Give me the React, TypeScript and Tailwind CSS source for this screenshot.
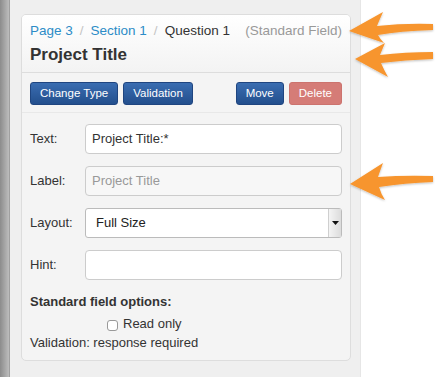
import { ReactNode } from 'react';

const font = { fontFamily: '"Liberation Sans", Arial, sans-serif' };

function Field({ label, children }: { label: string; children: ReactNode }) {
  return (
    <div className="flex items-center h-[30px]">
      <div className="w-[55px] text-[13px] text-[#333]">{label}</div>
      <div className="flex-1">{children}</div>
    </div>
  );
}

function Btn({ children, danger }: { children: ReactNode; danger?: boolean }) {
  return (
    <div
      className={
        danger
          ? 'h-[23px] px-[9px] flex items-center rounded-[3px] text-[11.5px] text-white bg-[#d57c77] border border-[#cc736e]'
          : 'h-[23px] px-[9px] flex items-center rounded-[3px] text-[11.5px] text-white bg-gradient-to-b from-[#3a6db1] to-[#234f8d] border border-[#1f4580]'
      }
    >
      {children}
    </div>
  );
}

function Arrows() {
  return (
    <svg className="absolute left-0 top-0 pointer-events-none" width="438" height="377">
      <defs>
        <filter id="sh" x="-10%" y="-20%" width="130%" height="150%">
          <feDropShadow dx="0" dy="1" stdDeviation="1" floodColor="#000" floodOpacity="0.25" />
        </filter>
      </defs>
      <g fill="#f7952e" filter="url(#sh)">
        <path d="M349,31 L383,12 Q379,21 377,26 Q405,23 433,24 L433,30 Q400,31 378,35 Q380,39 384,43 Z" />
        <path d="M355,59 L385,43 Q382,50 380,55 Q405,52 433,52 L433,59 Q405,60 381,63 Q384,70 388,77 Z" />
        <path d="M350,184 L383,163 Q380,171 378,177 Q405,175 433,176 L433,182 Q405,183 379,187 Q381,194 385,200 Z" />
      </g>
    </svg>
  );
}

export default function App() {
  return (
    <div className="relative flex w-[438px] h-[377px] bg-white overflow-hidden" style={font}>
      <div className="w-[10px] bg-gradient-to-r from-[#8c8c8c] to-[#bdbdbd] border-r border-[#a0a0a0]" />
      <div className="w-[351px] bg-[#efefef] border-r border-[#e6e6e6] pl-[11px] pr-[9px] pt-[14px]">
        <div className="border border-[#dddddd] rounded-[5px] bg-[#f4f4f4] overflow-hidden">
          <div className="h-[58px] px-[8px] pt-[7px] bg-gradient-to-b from-white to-[#f3f3f3] border-b border-[#dddddd]">
            <div className="flex items-center text-[13.5px] h-[18px]">
              <span className="text-[#2c8cc7]">Page 3</span>
              <span className="text-[#c4c4c4] px-[7px]">/</span>
              <span className="text-[#2c8cc7]">Section 1</span>
              <span className="text-[#c4c4c4] px-[7px]">/</span>
              <span className="text-[#333]">Question 1</span>
              <span className="ml-auto text-[#999]">(Standard Field)</span>
            </div>
            <div className="mt-[4px] text-[17px] font-bold text-[#333] leading-[22px]">Project Title</div>
          </div>
          <div className="px-[8px] pt-[9px]">
            <div className="flex items-center gap-[5px]">
              <Btn>Change Type</Btn>
              <Btn>Validation</Btn>
              <div className="ml-auto flex gap-[5px]">
                <Btn>Move</Btn>
                <Btn danger>Delete</Btn>
              </div>
            </div>
          </div>
          <div className="mt-[7px] border-t border-[#e8e8e8] px-[8px] pt-[11px] flex flex-col gap-[12px]">
            <Field label="Text:">
              <div className="h-[30px] rounded-[4px] border border-[#cccccc] bg-white px-[6px] flex items-center text-[13px] text-[#333]">
                Project Title:*
              </div>
            </Field>
            <Field label="Label:">
              <div className="h-[30px] rounded-[4px] border border-[#cccccc] bg-[#f7f7f7] px-[6px] flex items-center text-[13px] text-[#999]">
                Project Title
              </div>
            </Field>
            <Field label="Layout:">
              <div className="h-[30px] rounded-[3px] border border-[#bbbbbb] bg-white flex items-center text-[13px] text-[#222]">
                <span className="pl-[10px] flex-1">Full Size</span>
                <div className="w-[13px] h-full bg-gradient-to-r from-[#f4f4f4] to-[#dcdcdc] border-l border-[#cfcfcf] flex items-center justify-center">
                  <svg width="7" height="4" viewBox="0 0 7 4">
                    <path d="M0,0 L7,0 L3.5,4 Z" fill="#111" />
                  </svg>
                </div>
              </div>
            </Field>
            <Field label="Hint:">
              <div className="h-[30px] rounded-[4px] border border-[#cccccc] bg-white" />
            </Field>
          </div>
          <div className="px-[8px] pt-[13px] pb-[8px] text-[13px] text-[#333]">
            <div className="font-bold leading-[18px]">Standard field options:</div>
            <div className="flex items-center mt-[4px] pl-[77px] leading-[18px]">
              <span className="inline-block w-[11px] h-[11px] rounded-[3px] border border-[#999] bg-white mr-[5px] mt-[2px]" />
              Read only
            </div>
            <div className="leading-[18px] mt-[1px]">Validation: response required</div>
          </div>
        </div>
      </div>
      <Arrows />
    </div>
  );
}
